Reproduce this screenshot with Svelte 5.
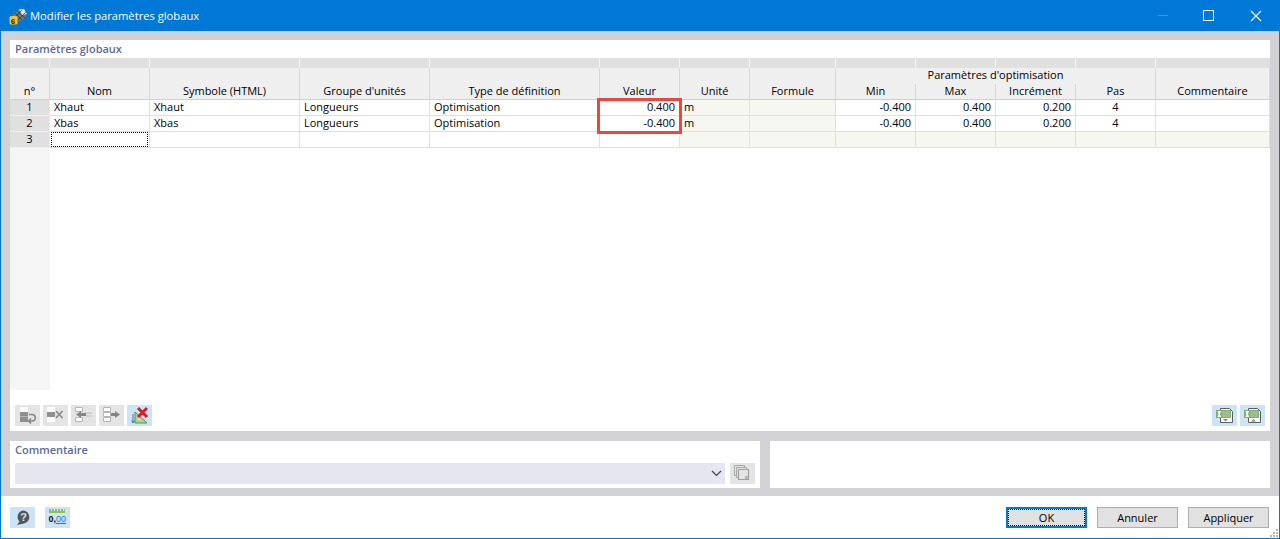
<script>
	const columns = [40, 100, 150, 130, 170, 80, 70, 86, 80, 80, 80, 80, 114];

	const rows = [
		{ nr: 1, name: 'Xhaut', symbol: 'Xhaut', group: 'Longueurs', type: 'Optimisation', value: '0.400', unit: 'm', min: '-0.400', max: '0.400', step: '0.200', count: '4' },
		{ nr: 2, name: 'Xbas', symbol: 'Xbas', group: 'Longueurs', type: 'Optimisation', value: '-0.400', unit: 'm', min: '-0.400', max: '0.400', step: '0.200', count: '4' }
	];
</script>

<div class="window">
	<header class="titlebar">
		<svg class="app-icon" width="18" height="18" viewBox="0 0 18 18">
			<path d="M4 8 L10 2 L15 2 L18 7 L15 12 L9 15 L5 13 Z" fill="#6f7580" />
			<path d="M10 2 L15 2 L18 7 L13 8 Z" fill="#dfe3ea" />
			<path d="M6 6 L13 13 M8 4 L16 11 M5 11 L13 3 M8 14 L17 5" stroke="#2f343c" stroke-width="0.7" fill="none" />
			<rect x="0.500" y="9" width="8" height="8.500" rx="1.500" fill="#f3c331" />
			<text x="1.800" y="16.500" class="six">6</text>
		</svg>
		<span class="title">Modifier les paramètres globaux</span>
		<div class="controls">
			<span class="min"></span>
			<span class="max"></span>
			<svg width="12" height="12" viewBox="0 0 12 12" class="close">
				<path d="M1 1 L11 11 M11 1 L1 11" stroke="#fff" stroke-width="1.1" />
			</svg>
		</div>
	</header>

	<div class="body">
		<section class="panel main">
			<h2>Paramètres globaux</h2>
			<div class="grid-wrap">
				<table>
					<colgroup>
						{#each columns as w}
							<col style="width: {w}px" />
						{/each}
					</colgroup>
					<thead>
						<tr class="strip">
							{#each columns as _}
								<th></th>
							{/each}
						</tr>
						<tr class="head-top">
							<th rowspan="2" class="nr-head">n°</th>
							<th rowspan="2">Nom</th>
							<th rowspan="2">Symbole (HTML)</th>
							<th rowspan="2">Groupe d'unités</th>
							<th rowspan="2">Type de définition</th>
							<th rowspan="2">Valeur</th>
							<th rowspan="2">Unité</th>
							<th rowspan="2">Formule</th>
							<th colspan="4" class="group-head">Paramètres d'optimisation</th>
							<th rowspan="2">Commentaire</th>
						</tr>
						<tr class="head-bottom">
							<th>Min</th>
							<th>Max</th>
							<th>Incrément</th>
							<th>Pas</th>
						</tr>
					</thead>
					<tbody>
						{#each rows as row}
							<tr>
								<td class="nr">{row.nr}</td>
								<td>{row.name}</td>
								<td>{row.symbol}</td>
								<td>{row.group}</td>
								<td>{row.type}</td>
								<td class="right">{row.value}</td>
								<td class="ro">{row.unit}</td>
								<td class="ro"></td>
								<td class="right">{row.min}</td>
								<td class="right">{row.max}</td>
								<td class="right">{row.step}</td>
								<td class="center">{row.count}</td>
								<td></td>
							</tr>
						{/each}
						<tr>
							<td class="nr">3</td>
							<td class="focus"><span></span></td>
							<td></td>
							<td></td>
							<td></td>
							<td></td>
							<td class="ro"></td>
							<td class="ro"></td>
							<td class="ro"></td>
							<td class="ro"></td>
							<td class="ro"></td>
							<td class="ro"></td>
							<td class="ro"></td>
						</tr>
						<tr class="filler">
							<td></td>
							<td colspan="12"></td>
						</tr>
					</tbody>
				</table>
				<div class="highlight"></div>
			</div>

			<div class="toolbar">
				<div class="tools">
					<button class="tool off" aria-label="Insérer">
						<svg width="25" height="21" viewBox="0 0 25 21">
							<path d="M5 2h8v5H5z" fill="#fff" />
							<path d="M5 7h8v10H5z" fill="#8f8f8f" />
							<path d="M5 11.500h8" stroke="#b5b5b5" />
							<path d="M14 9.500h3a3 3 0 0 1 0 6.500h-3M16 13.500l-2.500 2.500 2.500 2.500" fill="none" stroke="#858585" stroke-width="1.500" />
						</svg>
					</button>
					<button class="tool off" aria-label="Supprimer">
						<svg width="25" height="21" viewBox="0 0 25 21">
							<path d="M4 2h8v5H4zM4 12h8v5H4z" fill="#fff" />
							<path d="M4 7h8v5H4z" fill="#8f8f8f" />
							<path d="M13 6l6.500 7M19.500 6L13 13" stroke="#8c8c8c" stroke-width="1.800" />
						</svg>
					</button>
					<button class="tool off" aria-label="Monter">
						<svg width="25" height="21" viewBox="0 0 25 21">
							<path d="M4.500 2.500h7v4h-7zM4.500 12.500h7v4h-7z" fill="#fff" stroke="#b5b5b5" />
							<path d="M5 9.500l5-3.500v2h5v3h-5v2z" fill="#858585" />
							<path d="M15 8h6M15 11h6" stroke="#bdbdbd" />
						</svg>
					</button>
					<button class="tool off" aria-label="Descendre">
						<svg width="25" height="21" viewBox="0 0 25 21">
							<path d="M4.500 2.500h7v4h-7zM4.500 7.500h7v4h-7zM4.500 12.500h7v4h-7z" fill="#fff" stroke="#b5b5b5" />
							<path d="M12 8h4V6l5 3.500-5 3.500v-2h-4z" fill="#858585" />
						</svg>
					</button>
					<button class="tool on" aria-label="Effacer">
						<svg width="25" height="21" viewBox="0 0 25 21">
							<path d="M8 18V7l12 11z" fill="#a9d88f" stroke="#5f9150" />
							<path d="M11 15v-3l3.500 3z" fill="#cce4f7" />
							<path d="M6 9v9M4.500 15.500L6 18l1.500-2.500" fill="none" stroke="#4a78b8" />
							<path d="M11 3l9 9M20 3l-9 9" stroke="#e01b24" stroke-width="3" />
						</svg>
					</button>
				</div>
				<div class="tools">
					<button class="tool on" aria-label="Exporter">
						<svg width="25" height="21" viewBox="0 0 25 21">
							<path d="M8.500 3.500h9l3 3v11h-12z" fill="#fff" stroke="#5c5c5c" />
							<path d="M4 5h15v8H4z" fill="#84ad74" />
							<path d="M10.500 7h7M10.500 9h7M10.500 11h7" stroke="#e4efdd" stroke-dasharray="1 1" />
							<path d="M5.500 6h3.500l-1 3 1 3H5.500l1-3z" fill="#fff" />
							<path d="M11 14h5l-2.500 2.500z" fill="#6c9a5b" />
						</svg>
					</button>
					<button class="tool on" aria-label="Importer">
						<svg width="25" height="21" viewBox="0 0 25 21">
							<path d="M8.500 3.500h9l3 3v11h-12z" fill="#fff" stroke="#5c5c5c" />
							<path d="M4 5h15v8H4z" fill="#84ad74" />
							<path d="M10.500 7h7M10.500 9h7M10.500 11h7" stroke="#e4efdd" stroke-dasharray="1 1" />
							<path d="M5.500 6h3.500l-1 3 1 3H5.500l1-3z" fill="#fff" />
							<path d="M11 16.500h5L13.500 14z" fill="#6c9a5b" />
						</svg>
					</button>
				</div>
			</div>
		</section>

		<div class="lower">
			<section class="panel comment">
				<h2>Commentaire</h2>
				<div class="comment-row">
					<div class="select">
						<svg width="11" height="7" viewBox="0 0 11 7">
							<path d="M1 1l4.500 4.500L10 1" fill="none" stroke="#444" stroke-width="1.2" />
						</svg>
					</div>
					<button class="tool off" aria-label="Bibliothèque">
						<svg width="25" height="21" viewBox="0 0 25 21">
							<path d="M4.500 2.500h10v10h-10z" fill="none" stroke="#a8a8a8" />
							<path d="M6.500 4.500h10v10h-10z" fill="#e4e4e4" stroke="#a8a8a8" />
							<path d="M8.500 6.500h10v10h-10z" fill="#e4e4e4" stroke="#a0a0a0" stroke-width="1.200" />
							<path d="M15 13h3v3h-3z" fill="#b5b5b5" />
						</svg>
					</button>
				</div>
			</section>
			<section class="panel blank"></section>
		</div>
	</div>

	<footer class="footer">
		<div class="foot-icons">
			<button class="tool on" aria-label="Aide">
				<svg width="25" height="21" viewBox="0 0 25 21">
					<path d="M13 3.500a6.500 6.500 0 0 1 1 12.900L7 18l2.500-3.500A6.500 6.500 0 0 1 13 3.500z" fill="#555" />
					<text x="10.200" y="14" class="q">?</text>
				</svg>
			</button>
			<button class="tool on" aria-label="Unités">
				<svg width="25" height="21" viewBox="0 0 25 21">
					<path d="M4 2h16v4H4z" fill="#8cc063" />
					<path d="M6.500 2v2M9.500 2v2M12.500 2v2M15.500 2v2M18.500 2v2" stroke="#dcedcf" />
					<text x="3.500" y="15" class="num">0,</text>
					<text x="11" y="15" class="num blue">00</text>
					<path d="M11 16.500h10" stroke="#2f6fd0" />
				</svg>
			</button>
		</div>
		<div class="actions">
			<button class="btn default"><span>OK</span></button>
			<button class="btn">Annuler</button>
			<button class="btn">Appliquer</button>
		</div>
		<svg class="grip" width="9" height="9" viewBox="0 0 9 9">
			<path d="M6 0h2v2H6zM3 3h2v2H3zM6 3h2v2H6zM0 6h2v2H0zM3 6h2v2H3zM6 6h2v2H6z" fill="#b5b5b5" />
		</svg>
	</footer>
</div>

<style>
	:global(body) {
		margin: 0;
		background: #fff;
	}

	.window {
		width: 1280px;
		height: 539px;
		box-sizing: border-box;
		border: 1px solid #0078d7;
		border-top: 0;
		display: flex;
		flex-direction: column;
		font-family: "Open Sans", "Noto Sans", sans-serif;
		font-size: 11px;
		color: #000;
		overflow: hidden;
	}

	.titlebar {
		height: 31px;
		flex: none;
		background: #0078d7;
		display: flex;
		align-items: center;
		padding-left: 8px;
		color: #fff;
	}

	.app-icon {
		margin-right: 3px;
	}

	.six {
		font: bold 8px "Liberation Sans", sans-serif;
		fill: #222;
	}

	.title {
		font-size: 11.2px;
	}

	.controls {
		margin-left: auto;
		display: flex;
		align-items: center;
		padding-right: 17px;
	}

	.min {
		width: 10px;
		height: 1px;
		background: #3f97e2;
		margin-right: 35px;
	}

	.max {
		width: 9px;
		height: 9px;
		border: 1px solid #fff;
		margin-right: 36px;
	}

	.close {
		display: block;
	}

	.body {
		flex: 1;
		min-height: 0;
		background: #d2d1d6;
		padding: 9px 9px 8px;
		display: flex;
		flex-direction: column;
		gap: 10px;
	}

	.panel {
		background: #fff;
	}

	.panel h2 {
		margin: 0;
		font-size: 11px;
		font-weight: 600;
		color: #5a6a96;
		line-height: 18px;
		padding-left: 5px;
		height: 18px;
	}

	.main {
		flex: 1;
		min-height: 0;
		display: flex;
		flex-direction: column;
	}

	.grid-wrap {
		position: relative;
	}

	table {
		table-layout: fixed;
		border-collapse: separate;
		border-spacing: 0;
		width: 1260px;
	}

	th,
	td {
		box-sizing: border-box;
		padding: 0 4px 1px;
		font-weight: 400;
		line-height: 14px;
		white-space: nowrap;
		overflow: hidden;
	}

	.strip th {
		height: 10px;
		padding: 0;
		background: #e0e0e0;
		border-right: 1px solid #f4f4f4;
	}

	.strip th:last-child {
		border-right: 0;
	}

	thead th {
		background: #efefef;
		border-right: 1px solid #d8d8d8;
		text-align: center;
		vertical-align: bottom;
	}

	.head-top th {
		height: 16px;
		border-bottom: 1px solid #cfcfcf;
	}

	.head-top .group-head {
		border-bottom: 0;
		border-right: 1px solid #d8d8d8;
		padding-bottom: 2px;
		vertical-align: middle;
	}

	.head-bottom th {
		height: 16px;
		border-bottom: 1px solid #cfcfcf;
	}

	tbody td {
		height: 16px;
		border-right: 1px solid #e0e0e0;
		border-bottom: 1px solid #e0e0e0;
		background: #fff;
	}

	tbody td.nr {
		background: #e0e0e0;
		text-align: center;
		border-right: 1px solid #e8e8e8;
		border-bottom: 1px solid #eeeeee;
	}

	tbody td.ro {
		background: #f7f7f2;
	}

	.right {
		text-align: right;
	}

	.center {
		text-align: center;
	}

	td.focus {
		padding: 0 1px;
	}

	td.focus span {
		display: block;
		box-sizing: border-box;
		height: 15px;
		width: 97px;
		border: 1px dotted #000;
	}

	.filler td {
		height: 242px;
		border: 0;
		padding: 0;
	}

	.filler td:first-child {
		background: #f5f5f5;
	}

	.highlight {
		position: absolute;
		left: 587px;
		top: 40px;
		width: 85px;
		height: 36px;
		box-sizing: border-box;
		border: 3px solid #e8483f;
	}

	.toolbar {
		margin-top: auto;
		display: flex;
		justify-content: space-between;
		padding: 0 5px 5px;
	}

	.tools {
		display: flex;
		gap: 3px;
	}

	.tool {
		width: 25px;
		height: 21px;
		padding: 0;
		border: 0;
		display: block;
	}

	.tool svg {
		display: block;
	}

	.tool.off {
		background: #e4e4e4;
	}

	.tool.on {
		background: #cce4f7;
	}

	.lower {
		flex: none;
		height: 47px;
		display: flex;
		gap: 10px;
	}

	.comment {
		width: 750px;
		flex: none;
	}

	.comment h2 {
		height: 22px;
		line-height: 18px;
	}

	.comment-row {
		display: flex;
		gap: 5px;
		padding: 0 5px;
	}

	.select {
		flex: 1;
		height: 21px;
		background: #e6e6f0;
		display: flex;
		align-items: center;
		justify-content: flex-end;
		padding-right: 3px;
	}

	.blank {
		flex: 1;
	}

	.footer {
		flex: none;
		height: 42px;
		position: relative;
		background: #fff;
		display: flex;
		align-items: center;
		justify-content: space-between;
		padding: 0 10px 0 9px;
	}

	.foot-icons {
		display: flex;
		gap: 10px;
	}

	.q {
		font: bold 11px "Liberation Sans", sans-serif;
		fill: #cce4f7;
	}

	.num {
		font: bold 9px "Liberation Sans", sans-serif;
		fill: #111;
	}

	.num.blue {
		fill: #2f6fd0;
		font-weight: 400;
	}

	.actions {
		display: flex;
		gap: 10px;
	}

	.btn {
		width: 81px;
		height: 21px;
		box-sizing: border-box;
		background: #e1e1e1;
		border: 1px solid #adadad;
		font: inherit;
		font-size: 11px;
		color: #000;
		padding: 0;
	}

	.btn.default {
		border: 2px solid #0078d7;
	}

	.btn.default span {
		display: block;
		height: 17px;
		box-sizing: border-box;
		line-height: 15px;
		border: 1px dotted #000;
	}

	.grip {
		position: absolute;
		right: 0;
		bottom: 0;
	}
</style>
